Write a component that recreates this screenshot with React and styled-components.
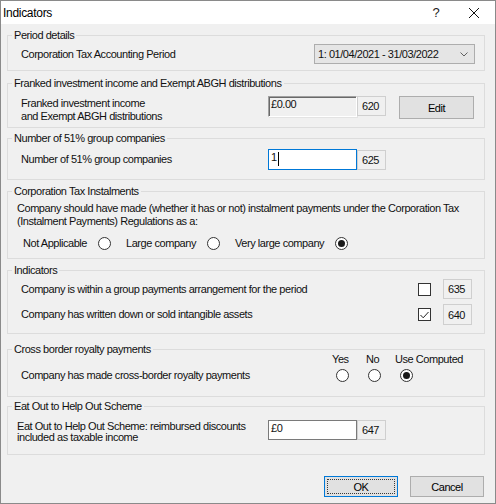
import React from "react";
import styled, { createGlobalStyle } from "styled-components";

const GlobalStyle = createGlobalStyle`
  html, body {
    margin: 0;
    padding: 0;
    background: #f0f0f0;
  }
  body {
    font-family: "Liberation Sans", Arial, sans-serif;
    font-size: 11px;
    color: #111;
  }
`

const Window = styled.div`
  width: 496px;
  height: 504px;
  box-sizing: border-box;
  border: 1px solid #8a8a8a;
  background: #f0f0f0;
  display: flex;
  flex-direction: column;
  letter-spacing: -0.45px;
`

const TitleBar = styled.div`
  height: 23px;
  background: #fff;
  display: flex;
  align-items: center;
  padding-left: 2px;
  font-size: 12px;
  letter-spacing: -0.3px;
  color: #000;
`

const Title = styled.div`
  flex: 1;
`

const HelpMark = styled.span`
  font-size: 13px;
  width: 20px;
  text-align: center;
  margin-right: 23px;
  color: #222;
`

const CloseBox = styled.div`
  width: 10px;
  height: 10px;
  margin-right: 16px;
  display: flex;
`

const Body = styled.div`
  padding: 5px 10px 0 6px;
  display: flex;
  flex-direction: column;
`

const Group = styled.fieldset`
  margin: ${p => p.$top || 0}px 0 0 0;
  padding: 0;
  border: 1px solid #dcdcdc;
  min-width: 0;
`

const Legend = styled.legend`
  margin-left: 4px;
  padding: 0 2px;
  line-height: 13px;
  color: #111;
`

const Row = styled.div`
  display: flex;
  align-items: ${p => p.$align || "center"};
  padding: ${p => p.$pad};
`

const Label = styled.div`
  width: ${p => p.$w ? p.$w + "px" : "auto"};
  flex: ${p => p.$w ? "none" : 1};
  line-height: ${p => p.$lh || 13}px;
  margin-top: ${p => p.$mt || 0}px;
`

const Combo = styled.div`
  width: 161px;
  height: 20px;
  box-sizing: border-box;
  border: 1px solid #adadad;
  background: #e5e5e5;
  display: flex;
  align-items: center;
  padding: 0 6px 0 3px;
  justify-content: space-between;
`

const Field = styled.div`
  width: 89px;
  height: ${p => p.$h || 21}px;
  box-sizing: border-box;
  padding: 1px 2px;
  line-height: 13px;
  display: flex;
  align-items: flex-start;
  background: ${p => p.$variant === "sunken" ? "#f0f0f0" : "#fff"};
  border: 1px solid ${p => p.$variant === "focus" ? "#0078d7" : "#7a7a7a"};
  ${p => p.$variant === "sunken" && `
    border-color: #a0a0a0 #ffffff #ffffff #a0a0a0;
    box-shadow: inset 1px 1px 0 #696969, 1px 1px 0 #e3e3e3;
  `}
`

const Caret = styled.span`
  display: inline-block;
  width: 1px;
  height: 14px;
  background: #000;
  margin-left: 1px;
  margin-top: 1px;
`

const Code = styled.div`
  width: 29px;
  height: ${p => p.$h || 20}px;
  box-sizing: border-box;
  border: 1px solid #cfcfcf;
  background: #f0f0f0;
  display: flex;
  align-items: center;
  padding-left: 4px;
  margin-left: ${p => p.$ml || 0}px;
`

const Button = styled.button`
  width: ${p => p.$w || 75}px;
  height: ${p => p.$h || 21}px;
  margin-left: ${p => p.$ml || 0}px;
  padding: 0;
  font: inherit;
  letter-spacing: inherit;
  color: #000;
  background: #e1e1e1;
  border: 1px solid ${p => p.$default ? "#0078d7" : "#adadad"};
  position: relative;
  ${p => p.$default && `
    &::after {
      content: "";
      position: absolute;
      inset: 2px;
      border: 1px dotted #3a3a3a;
    }
  `}
`

const Paragraph = styled.div`
  padding: 4px 9px 0 9px;
  line-height: 13px;
`

const RadioRow = styled.div`
  display: flex;
  align-items: center;
  padding: 9px 0 8px 15px;
  gap: 15px;
`

const Option = styled.label`
  display: flex;
  align-items: center;
  gap: 11px;
  line-height: 13px;
`

const Radio = styled.span`
  width: 13px;
  height: 13px;
  box-sizing: border-box;
  border-radius: 50%;
  border: 1px solid #333;
  background: #fff;
  display: flex;
  align-items: center;
  justify-content: center;
  margin-left: ${p => p.$ml || 0}px;
  &::after {
    content: "";
    width: 7px;
    height: 7px;
    border-radius: 50%;
    background: ${p => p.$on ? "#1a1a1a" : "transparent"};
  }
`

const CheckBox = styled.span`
  width: 13px;
  height: 13px;
  box-sizing: border-box;
  border: 1px solid #333;
  background: #fff;
  display: flex;
  align-items: center;
  justify-content: center;
`

const CheckRows = styled.div`
  display: flex;
  flex-direction: column;
  gap: 5px;
  padding: 2px 12px 8px 13px;
`

const RoyaltyGrid = styled.div`
  display: grid;
  grid-template-columns: 311px 34px 29px 1fr;
  grid-template-rows: 13px 13px;
  row-gap: 3px;
  line-height: 13px;
  margin-top: -3px;
  padding: 0 0 14px 13px;
`

const Footer = styled.div`
  display: flex;
  justify-content: flex-end;
  padding: 21px 11px 0 0;
`

const Chevron = () => (
  <svg width="8" height="5" viewBox="0 0 8 5">
    <path d="M0.5 0.5 L4 4 L7.5 0.5" fill="none" stroke="#606060" strokeWidth="1" />
  </svg>
)

const Tick = () => (
  <svg width="9" height="8" viewBox="0 0 9 8">
    <path d="M0.5 4 L3.2 6.8 L8.5 1" fill="none" stroke="#222" strokeWidth="1" />
  </svg>
)

export default function App() {
  return (
    <>
      <GlobalStyle />
      <Window>
        <TitleBar>
          <Title>Indicators</Title>
          <HelpMark>?</HelpMark>
          <CloseBox>
            <svg width="10" height="10" viewBox="0 0 10 10">
              <path d="M0 0 L10 10 M10 0 L0 10" stroke="#111" strokeWidth="1" />
            </svg>
          </CloseBox>
        </TitleBar>

        <Body>
          <Group>
            <Legend>Period details</Legend>
            <Row $pad="2px 9px 6px 13px">
              <Label>Corporation Tax Accounting Period</Label>
              <Combo>
                <span>1: 01/04/2021 - 31/03/2022</span>
                <Chevron />
              </Combo>
            </Row>
          </Group>

          <Group $top={6}>
            <Legend>Franked investment income and Exempt ABGH distributions</Legend>
            <Row $align="flex-start" $pad="6px 10px 4px 13px">
              <Label $w={247} $mt={1}>
                Franked investment income
                <br />
                and Exempt ABGH distributions
              </Label>
              <Field $variant="sunken">£0.00</Field>
              <Code>620</Code>
              <Button $ml={13} $h={23}>Edit</Button>
            </Row>
          </Group>

          <Group $top={4}>
            <Legend>Number of 51% group companies</Legend>
            <Row $pad="4px 10px 9px 13px">
              <Label $w={247}>Number of 51% group companies</Label>
              <Field $variant="focus">1<Caret /></Field>
              <Code>625</Code>
            </Row>
          </Group>

          <Group $top={5}>
            <Legend>Corporation Tax Instalments</Legend>
            <Paragraph>
              Company should have made (whether it has or not) instalment payments under the Corporation Tax
              <br />
              (Instalment Payments) Regulations as a:
            </Paragraph>
            <RadioRow>
              <Option>Not Applicable <Radio /></Option>
              <Option>Large company <Radio /></Option>
              <Option>Very large company <Radio $on /></Option>
            </RadioRow>
          </Group>

          <Group $top={5}>
            <Legend>Indicators</Legend>
            <CheckRows>
              <Row>
                <Label>Company is within a group payments arrangement for the period</Label>
                <CheckBox />
                <Code $ml={12} $w={30}>635</Code>
              </Row>
              <Row>
                <Label>Company has written down or sold intangible assets</Label>
                <CheckBox><Tick /></CheckBox>
                <Code $ml={12} $h={21}>640</Code>
              </Row>
            </CheckRows>
          </Group>

          <Group $top={9}>
            <Legend>Cross border royalty payments</Legend>
            <RoyaltyGrid>
              <span style={{ gridColumn: 2 }}>Yes</span>
              <span>No</span>
              <span>Use Computed</span>
              <Label>Company has made cross-border royalty payments</Label>
              <Radio $ml={4} />
              <Radio $ml={2} />
              <Radio $ml={5} $on />
            </RoyaltyGrid>
          </Group>

          <Group $top={3}>
            <Legend>Eat Out to Help Out Scheme</Legend>
            <Row $align="flex-start" $pad="7px 10px 11px 9px">
              <Label $w={251} $lh={11} $mt={1}>
                Eat Out to Help Out Scheme: reimbursed discounts
                <br />
                included as taxable income
              </Label>
              <Field $h={20}>£0</Field>
              <Code>647</Code>
            </Row>
          </Group>
        </Body>

        <Footer>
          <Button $default $w={74}>OK</Button>
          <Button $w={74} $ml={12}>Cancel</Button>
        </Footer>
      </Window>
    </>
  );
}
